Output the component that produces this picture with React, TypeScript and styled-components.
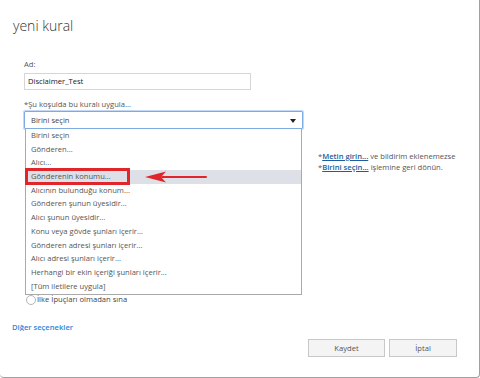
import React from 'react'
import styled, { createGlobalStyle } from 'styled-components'

const GlobalStyle = createGlobalStyle`
    html, body {
        margin: 0;
        padding: 0;
        background: #ffffff;
    }
    body {
        font-family: "Open Sans", "Noto Sans", sans-serif;
    }
`;

const options = [
    'Birini seçin',
    'Gönderen...',
    'Alıcı...',
    'Gönderenin konumu...',
    'Alıcının bulunduğu konum...',
    'Gönderen şunun üyesidir...',
    'Alıcı şunun üyesidir...',
    'Konu veya gövde şunları içerir...',
    'Gönderen adresi şunları içerir...',
    'Alıcı adresi şunları içerir...',
    'Herhangi bir ekin içeriği şunları içerir...',
    '[Tüm iletilere uygula]',
];

// styled components
const Dialog = styled.div`
    position: relative;
    display: flex;
    flex-direction: column;
    box-sizing: border-box;
    width: 480px;
    height: 378px;
    padding: 16px 22px 0 13px;
    border-right: 1px solid #a0a0a0;
    border-bottom: 1px solid #a0a0a0;
    border-bottom-right-radius: 4px;
    border-bottom-left-radius: 4px;
    overflow: hidden;
    color: #444;
`;

const Title = styled.h1`
    margin: 0;
    font-size: 14px;
    font-weight: 300;
    line-height: 20px;
    color: #333;
`;

const Form = styled.div`
    display: flex;
    flex-direction: column;
    padding-left: 11px;
    margin-top: 23px;
`;

const Label = styled.div`
    font-size: 7.6px;
    line-height: 11px;
    color: #555;
    margin-bottom: 3px;
`;

const TextInput = styled.div`
    box-sizing: border-box;
    width: 227px;
    height: 17px;
    padding: 0 3px;
    border: 1px solid #d6d6d6;
    font-size: 7.6px;
    line-height: 15px;
    color: #222;
`;

const ConditionRow = styled.div`
    display: grid;
    grid-template-columns: 280px 1fr;
    column-gap: 14px;
    margin-top: 9px;
`;

const LeftColumn = styled.div`
    display: flex;
    flex-direction: column;
`;

const SelectWrap = styled.div`
    position: relative;
    margin-top: -2px;
`;

const SelectBox = styled.div`
    box-sizing: border-box;
    display: flex;
    align-items: center;
    justify-content: space-between;
    width: 279px;
    height: 18px;
    padding: 0 6px 0 6px;
    border: 1px solid #7fabe3;
    box-shadow: 0 0 0 1px #c2d8f4;
    border-radius: 1px;
    font-size: 7.6px;
    color: #444;
`;

const Caret = styled.span`
    width: 0;
    height: 0;
    border-left: 3px solid transparent;
    border-right: 3px solid transparent;
    border-top: 4px solid #222;
    margin-top: 1px;
`;

const OptionList = styled.ul`
    position: absolute;
    top: 18px;
    left: 1px;
    box-sizing: border-box;
    width: 277px;
    margin: 0;
    padding: 0 0 1px 0;
    list-style: none;
    background: #fff;
    border: 1px solid #aaaaaa;
    border-top: none;
    z-index: 2;
`;

const OptionItem = styled.li<{ $active?: boolean }>`
    height: 13.7px;
    padding-left: 5px;
    font-size: 7.6px;
    line-height: 13.7px;
    color: #555;
    white-space: nowrap;
    background: ${p => (p.$active ? '#dde1e7' : 'transparent')};
`;

// red annotation drawn over the open list
const Highlight = styled.span`
    position: absolute;
    left: -1px;
    top: 39px;
    width: 105px;
    height: 17px;
    box-sizing: border-box;
    border: 3px solid #e0262a;
`;

const ArrowMark = styled.span`
    position: absolute;
    left: 118px;
    top: 41px;
    width: 64px;
    height: 14px;
    svg {
        display: block;
    }
`;

const RadioRow = styled.label`
    display: flex;
    align-items: center;
    gap: 1px;
    margin-top: 165px;
    margin-left: 2px;
    font-size: 7.6px;
    line-height: 11px;
    color: #444;
`;

const Radio = styled.span`
    box-sizing: border-box;
    width: 10px;
    height: 10px;
    border: 1px solid #b5b5b5;
    border-radius: 50%;
`;

const Hint = styled.div`
    padding-top: 52px;
    font-size: 7.6px;
    line-height: 11px;
    color: #555;
    white-space: nowrap;
`;

const HintLink = styled.a`
    color: #1c5e9e;
    font-weight: 600;
    text-decoration: underline;
`;

const MoreOptions = styled.a`
    display: block;
    height: 10px;
    overflow: hidden;
    margin-top: 16px;
    margin-left: -1px;
    font-size: 7.6px;
    line-height: 12px;
    font-weight: 600;
    color: #2f86d8;
    text-decoration: none;
`;

const Footer = styled.div`
    display: flex;
    justify-content: flex-end;
    gap: 4px;
    margin-top: 8px;
`;

const Button = styled.button<{ $width: number }>`
    box-sizing: border-box;
    width: ${p => p.$width}px;
    height: 18px;
    padding: 0;
    border: 1px solid #c8c8c8;
    background: #f4f4f4;
    font-family: inherit;
    font-size: 7.6px;
    color: #555;
`;

export default function App() {
    return (
        <>
            <GlobalStyle />
            <Dialog>
                <Title>yeni kural</Title>
                <Form>
                    <Label>Ad:</Label>
                    <TextInput>Disclaimer_Test</TextInput>
                    <ConditionRow>
                        <LeftColumn>
                            <Label>*Şu koşulda bu kuralı uygula...</Label>
                            <SelectWrap>
                                <SelectBox>
                                    Birini seçin
                                    <Caret />
                                </SelectBox>
                                <OptionList>
                                    {options.map((opt, index) => (
                                        <OptionItem key={index} $active={index === 3}>
                                            {opt}
                                        </OptionItem>
                                    ))}
                                    <Highlight />
                                    <ArrowMark>
                                        <svg width="64" height="14" viewBox="0 0 64 14">
                                            <path d="M18 7 H62" stroke="#e0262a" strokeWidth="2" strokeLinecap="round" />
                                            <path d="M1 7 L22 1.5 L17 7 L22 12.5 Z" fill="#e0262a" />
                                        </svg>
                                    </ArrowMark>
                                </OptionList>
                            </SelectWrap>
                            <RadioRow>
                                <Radio />
                                İlke İpuçları olmadan sına
                            </RadioRow>
                        </LeftColumn>
                        <Hint>
                            *<HintLink href="#">Metin girin...</HintLink> ve bildirim eklenemezse<br />
                            *<HintLink href="#">Birini seçin...</HintLink> işlemine geri dönün.
                        </Hint>
                    </ConditionRow>
                </Form>
                <MoreOptions href="#">Diğer seçenekler</MoreOptions>
                <Footer>
                    <Button $width={77}>Kaydet</Button>
                    <Button $width={68}>İptal</Button>
                </Footer>
            </Dialog>
        </>
    )
}
